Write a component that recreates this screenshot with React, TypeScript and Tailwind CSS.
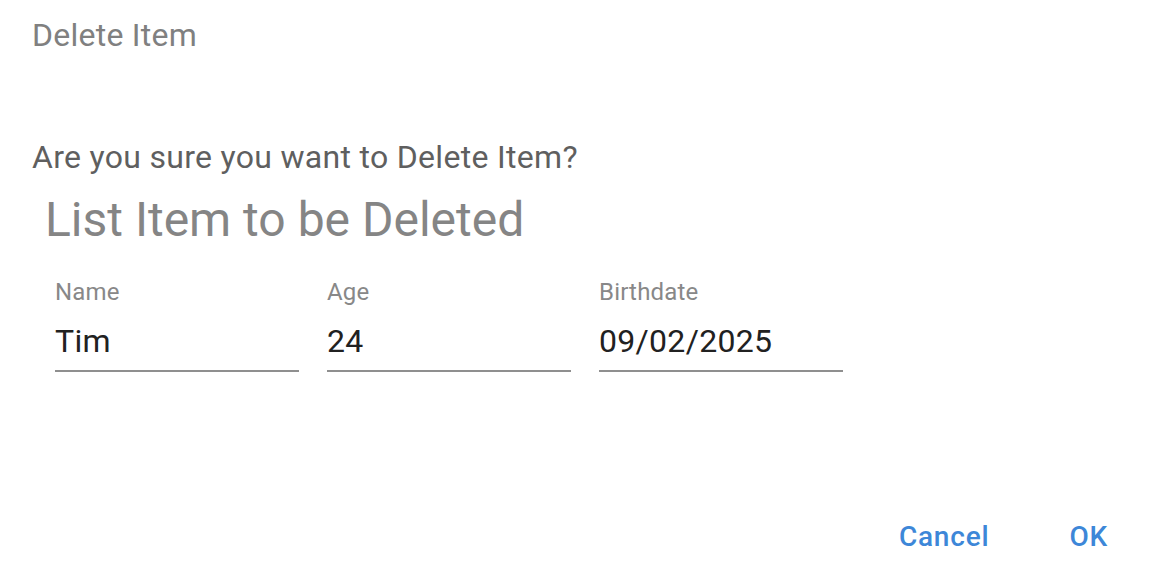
import React from "react";

const FIELDS = [
  { label: "Name", value: "Tim", pb: "pb-[9px]" },
  { label: "Age", value: "24", pb: "pb-[9px]" },
  { label: "Birthdate", value: "09/02/2025", pb: "pb-[7px]" },
];

export default function App() {
  return (
    <div className="w-[1176px] h-[574px] bg-white flex flex-col font-['Roboto',sans-serif] overflow-hidden">
      <h2 className="pl-8 pt-[15px] text-[32px] leading-[40px] tracking-[0.24px] font-normal text-[#808080]">
        Delete Item
      </h2>

      <p className="pl-8 mt-[82px] text-[32px] leading-[40px] tracking-[0.3px] text-[#5f5f5f]">
        Are you sure you want to Delete Item?
      </p>

      <h3 className="pl-[45px] mt-[15px] text-[48px] leading-[56px] text-[#858585]">List Item to be Deleted</h3>

      <div className="pl-[55px] mt-[30px] flex gap-[28px]">
        {FIELDS.map((f) => (
          <div key={f.label} className={`w-[244px] border-b-2 border-[#8f8f8f] ${f.pb}`}>
            <div className="text-[24px] leading-[28px] tracking-[0.2px] text-[#888888]">{f.label}</div>
            <div className="mt-[15px] text-[32px] leading-[40px] tracking-[0.3px] text-[#212121]">{f.value}</div>
          </div>
        ))}
      </div>

      <div className="mt-auto pb-[21px] pr-[68px] flex justify-end gap-[80px]">
        <button className="text-[28px] leading-[32px] tracking-[0.8px] font-medium text-[#3d87d8]">Cancel</button>
        <button className="text-[28px] leading-[32px] tracking-[0.8px] font-medium text-[#3d87d8]">OK</button>
      </div>
    </div>
  );
}
